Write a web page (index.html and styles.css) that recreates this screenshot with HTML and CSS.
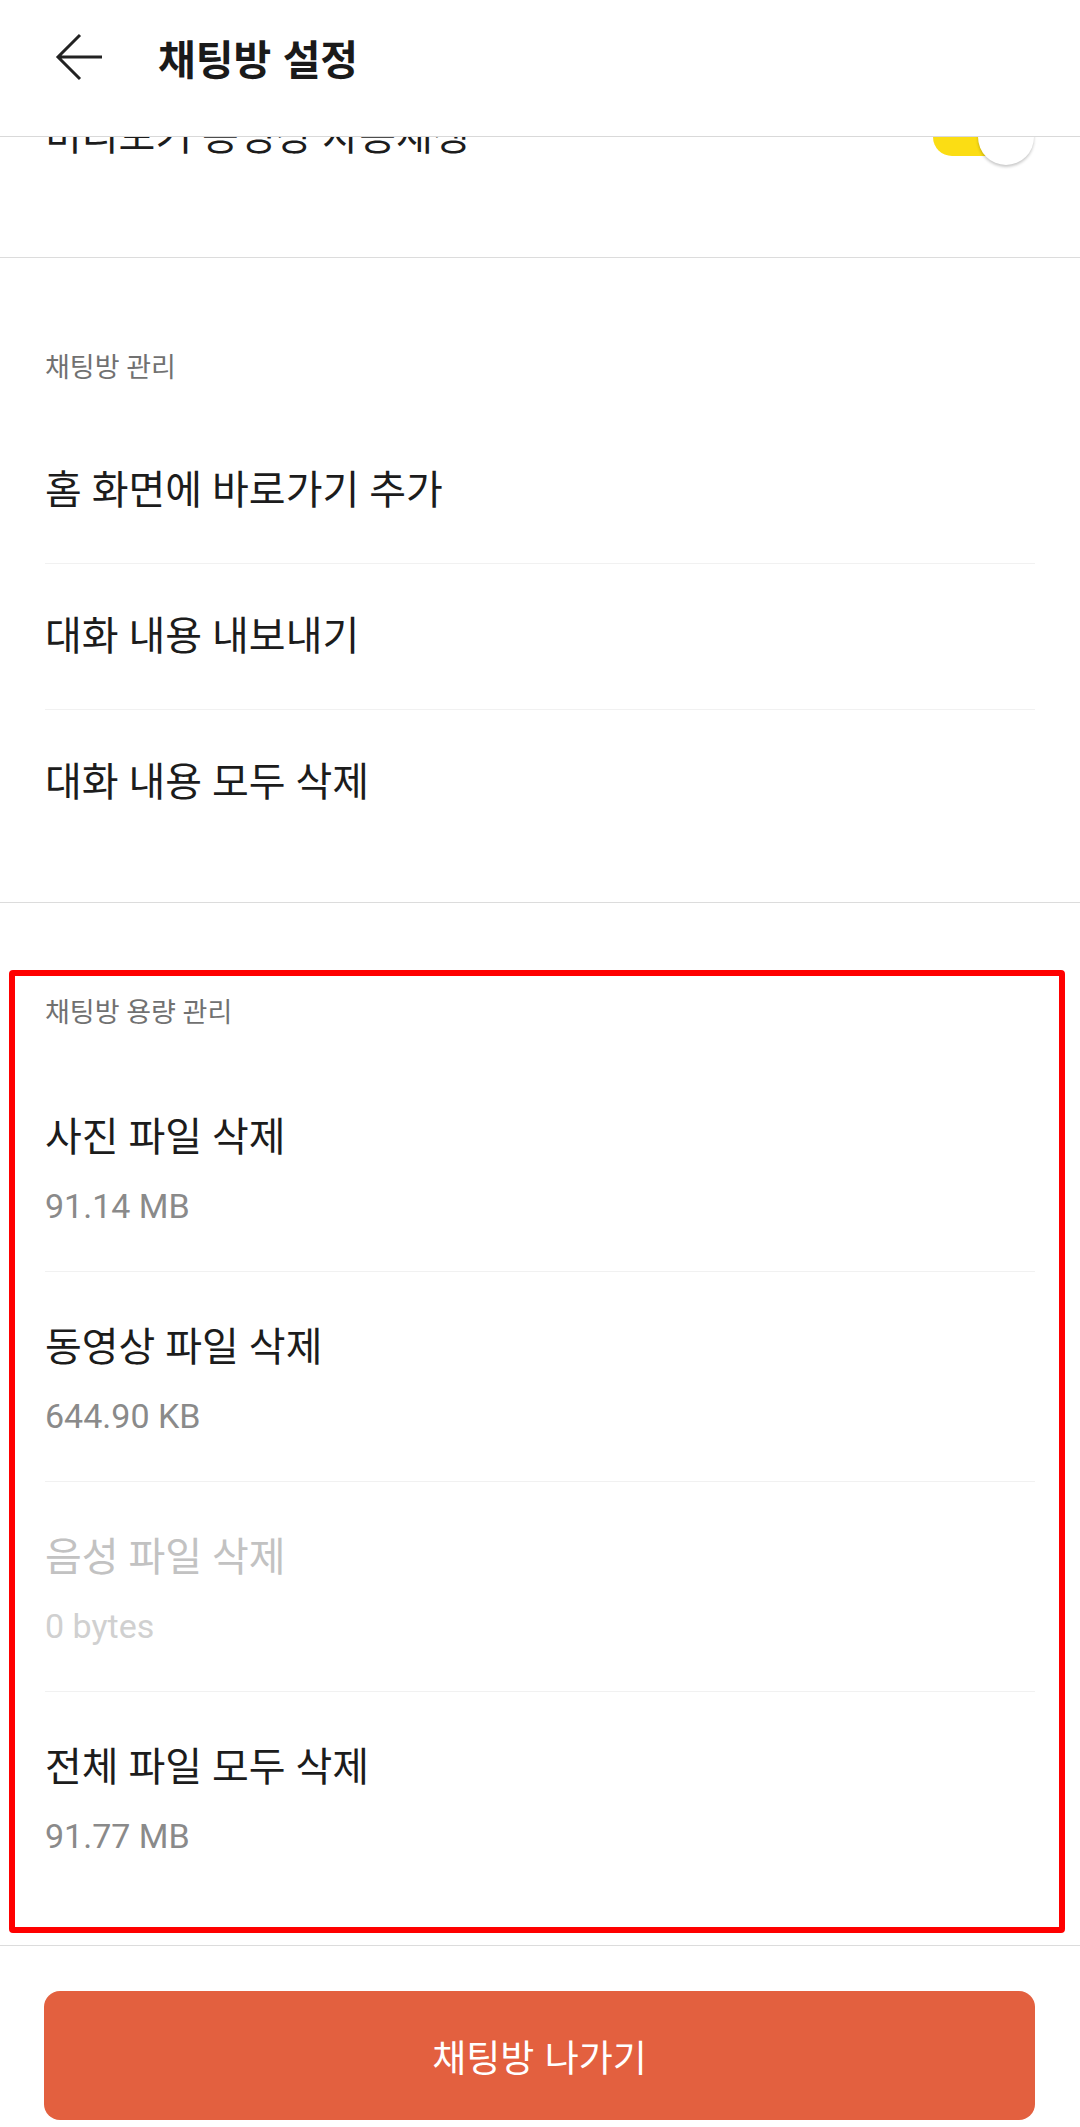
FILE: index.html
```html
<!DOCTYPE html>
<html lang="ko">
<head>
<meta charset="utf-8">
<link rel="stylesheet" href="styles.css">
</head>
<body>
<div class="screen">
  <header class="topbar">
    <svg class="back" viewBox="0 0 48 48" width="48" height="48" aria-hidden="true">
      <path d="M25 2 L3 24 L25 46 M3 24 H47" fill="none" stroke="#222" stroke-width="3"/>
    </svg>
    <h1 class="title">채팅방 설정</h1>
  </header>

  <main class="content">
    <section class="section section-partial">
      <div class="row row-toggle">
        <span class="row-text">미리보기 동영상 자동재생</span>
        <span class="toggle"><span class="track"></span><span class="knob"></span></span>
      </div>
    </section>

    <section class="section">
      <div class="section-label">채팅방 관리</div>
      <div class="row"><span class="row-text">홈 화면에 바로가기 추가</span></div>
      <div class="row"><span class="row-text">대화 내용 내보내기</span></div>
      <div class="row"><span class="row-text">대화 내용 모두 삭제</span></div>
    </section>

    <section class="section section-storage">
      <div class="highlight"></div>
      <div class="section-label">채팅방 용량 관리</div>
      <div class="row row-two">
        <span class="row-text">사진 파일 삭제</span>
        <span class="row-sub">91.14 MB</span>
      </div>
      <div class="row row-two">
        <span class="row-text">동영상 파일 삭제</span>
        <span class="row-sub">644.90 KB</span>
      </div>
      <div class="row row-two disabled">
        <span class="row-text">음성 파일 삭제</span>
        <span class="row-sub">0 bytes</span>
      </div>
      <div class="row row-two">
        <span class="row-text">전체 파일 모두 삭제</span>
        <span class="row-sub">91.77 MB</span>
      </div>
    </section>

    <div class="footer">
      <button class="leave">채팅방 나가기</button>
    </div>
  </main>
</div>
</body>
</html>
```

FILE: styles.css
```css
* { box-sizing: border-box; }
html, body { margin: 0; padding: 0; background: #fff; }
body {
  width: 1080px;
  height: 2127px;
  overflow: hidden;
  font-family: Roboto, "Noto Sans CJK KR", sans-serif;
  color: #1c1c1c;
}
.screen { width: 1080px; height: 2127px; display: flex; flex-direction: column; }

.topbar {
  position: relative;
  z-index: 2;
  height: 137px;
  flex: none;
  background: #fff;
  border-bottom: 1px solid #d9d9d9;
  display: flex;
  align-items: flex-start;
  padding: 33px 0 0 55px;
  gap: 55px;
}
.back { display: block; flex: none; }
.title {
  margin: 0;
  font-family: "Noto Sans CJK KR", sans-serif;
  font-weight: 700;
  font-size: 41px;
  line-height: 48px;
  color: #1a1a1a;
}

.content { flex: 1; overflow: hidden; display: flex; flex-direction: column; }

.section {
  border-bottom: 1px solid #dcdcdc;
  padding: 90px 0 47px;
  position: relative;
}
.section-partial { margin-top: -73px; padding-top: 0; padding-bottom: 48px; }

.section-label {
  padding: 0 45px;
  height: 40px;
  line-height: 40px;
  font-size: 27px;
  color: #717171;
  margin-bottom: 30px;
}

.row {
  margin: 0 45px;
  height: 146px;
  display: flex;
  align-items: center;
  border-top: 1px solid #f1f1f1;
}
.section-label + .row, .section-partial .row { border-top: none; height: 145px; }
.row-text {
  font-size: 40px;
  line-height: 50px;
  color: #1c1c1c;
}
.row-toggle { justify-content: space-between; margin-right: 46px; }

.toggle { position: relative; width: 101px; height: 56px; flex: none; }
.track {
  position: absolute; left: 0; top: 9px;
  width: 82px; height: 38px; border-radius: 19px;
  background: #fbdd14;
}
.knob {
  position: absolute; right: 0; top: 0;
  width: 56px; height: 56px; border-radius: 50%;
  background: #fff;
  box-shadow: 0 2px 3px rgba(0,0,0,0.22);
}

.row-two {
  height: 210px;
  flex-direction: column;
  align-items: flex-start;
  justify-content: flex-start;
  padding-top: 51px;
}
.section-label + .row-two { height: 209px; }
.row-sub {
  margin-top: 21px;
  font-size: 34px;
  line-height: 44px;
  color: #8a8a8a;
}
.disabled .row-text { color: #c2c2c2; }
.disabled .row-sub { color: #d0d0d0; }
.section-storage { padding-bottom: 44px; }
.section-storage .section-label { margin-bottom: 29px; }

.highlight {
  position: absolute;
  left: 9px; top: 67px;
  width: 1056px; height: 963px;
  border: 6px solid #ff0000;
  border-radius: 4px;
  pointer-events: none;
}

.footer { padding: 45px 45px 0 44px; }
.leave {
  display: block;
  width: 100%;
  height: 129px;
  border: none;
  border-radius: 16px;
  background: #e3603f;
  color: #fff;
  font-family: "Noto Sans CJK KR", sans-serif;
  font-size: 37px;
  padding: 0;
}
```
